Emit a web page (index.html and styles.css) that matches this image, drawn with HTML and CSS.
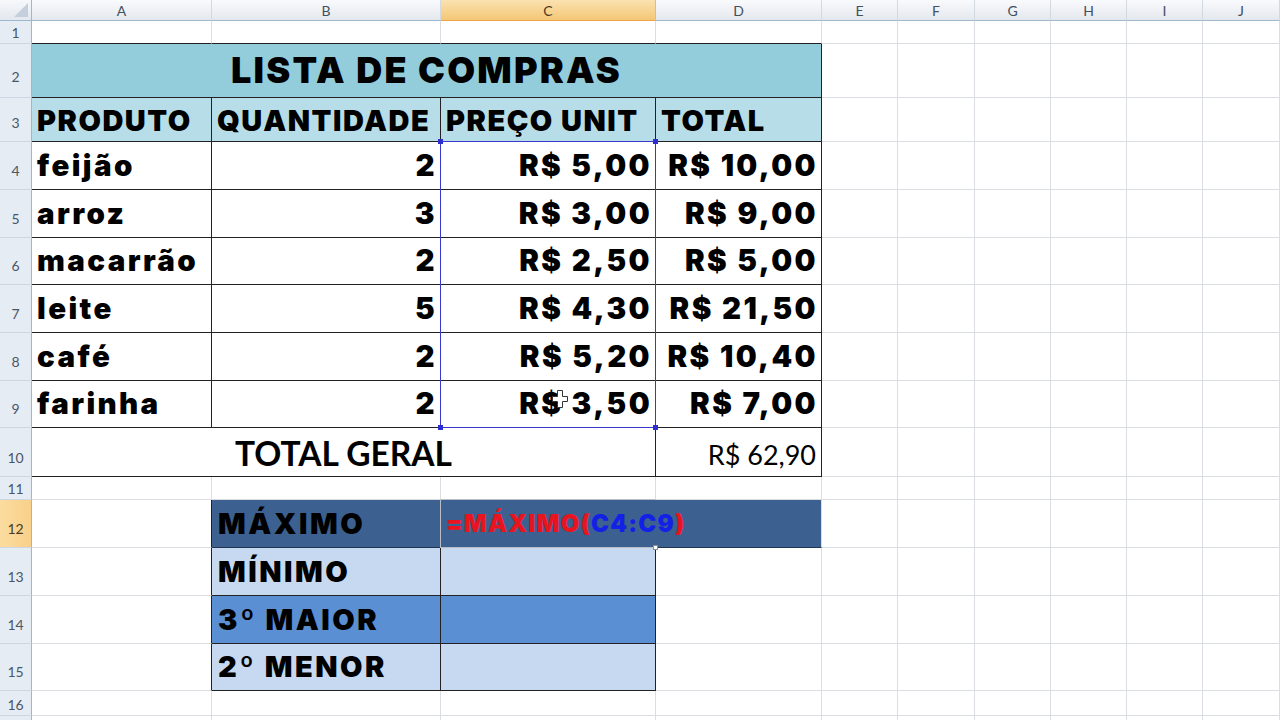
FILE: index.html
```html
<!DOCTYPE html>
<html lang="pt-BR">
<head>
<meta charset="utf-8">
<title>Lista de Compras</title>
<link rel="stylesheet" href="styles.css">
</head>
<body>
<div class="sheet">
  <!-- column headers -->
  <div class="corner"></div>
  <div class="ch">A</div><div class="ch">B</div><div class="ch sel">C</div><div class="ch">D</div>
  <div class="ch">E</div><div class="ch">F</div><div class="ch">G</div><div class="ch">H</div><div class="ch">I</div><div class="ch">J</div>

  <!-- row 1 -->
  <div class="rh">1</div>
  <div class="c bb"></div><div class="c bb"></div><div class="c bb"></div><div class="c bb"></div>
  <div class="c"></div><div class="c"></div><div class="c"></div><div class="c"></div><div class="c"></div><div class="c"></div>

  <!-- row 2 -->
  <div class="rh tall2">2</div>
  <div class="c title span4">LISTA DE COMPRAS</div>
  <div class="c"></div><div class="c"></div><div class="c"></div><div class="c"></div><div class="c"></div><div class="c"></div>

  <!-- row 3 -->
  <div class="rh tall">3</div>
  <div class="c th">PRODUTO</div><div class="c th">QUANTIDADE</div><div class="c th">PREÇO UNIT</div><div class="c th">TOTAL</div>
  <div class="c"></div><div class="c"></div><div class="c"></div><div class="c"></div><div class="c"></div><div class="c"></div>

  <!-- row 4 -->
  <div class="rh tall">4</div>
  <div class="c td">feijão</div><div class="c td num">2</div><div class="c td num">R$ 5,00</div><div class="c td num">R$ 10,00</div>
  <div class="c"></div><div class="c"></div><div class="c"></div><div class="c"></div><div class="c"></div><div class="c"></div>

  <!-- row 5 -->
  <div class="rh tall">5</div>
  <div class="c td">arroz</div><div class="c td num">3</div><div class="c td num">R$ 3,00</div><div class="c td num">R$ 9,00</div>
  <div class="c"></div><div class="c"></div><div class="c"></div><div class="c"></div><div class="c"></div><div class="c"></div>

  <!-- row 6 -->
  <div class="rh tall">6</div>
  <div class="c td">macarrão</div><div class="c td num">2</div><div class="c td num">R$ 2,50</div><div class="c td num">R$ 5,00</div>
  <div class="c"></div><div class="c"></div><div class="c"></div><div class="c"></div><div class="c"></div><div class="c"></div>

  <!-- row 7 -->
  <div class="rh tall">7</div>
  <div class="c td">leite</div><div class="c td num">5</div><div class="c td num">R$ 4,30</div><div class="c td num">R$ 21,50</div>
  <div class="c"></div><div class="c"></div><div class="c"></div><div class="c"></div><div class="c"></div><div class="c"></div>

  <!-- row 8 -->
  <div class="rh tall">8</div>
  <div class="c td">café</div><div class="c td num">2</div><div class="c td num">R$ 5,20</div><div class="c td num">R$ 10,40</div>
  <div class="c"></div><div class="c"></div><div class="c"></div><div class="c"></div><div class="c"></div><div class="c"></div>

  <!-- row 9 -->
  <div class="rh tall">9</div>
  <div class="c td">farinha</div><div class="c td num">2</div><div class="c td num">R$ 3,50</div><div class="c td num">R$ 7,00</div>
  <div class="c"></div><div class="c"></div><div class="c"></div><div class="c"></div><div class="c"></div><div class="c"></div>

  <!-- row 10 -->
  <div class="rh tall">10</div>
  <div class="c tot span3">TOTAL GERAL</div><div class="c totv">R$ 62,90</div>
  <div class="c"></div><div class="c"></div><div class="c"></div><div class="c"></div><div class="c"></div><div class="c"></div>

  <!-- row 11 -->
  <div class="rh">11</div>
  <div class="c"></div><div class="c"></div><div class="c"></div><div class="c"></div>
  <div class="c"></div><div class="c"></div><div class="c"></div><div class="c"></div><div class="c"></div><div class="c"></div>

  <!-- row 12 -->
  <div class="rh tall sel">12</div>
  <div class="c rb"></div>
  <div class="c lab dark">MÁXIMO</div>
  <div class="c fx span2"><span class="red">=MÁXIMO(</span><span class="blue">C4:C9</span><span class="red">)</span></div>
  <div class="c"></div><div class="c"></div><div class="c"></div><div class="c"></div><div class="c"></div><div class="c"></div>

  <!-- row 13 -->
  <div class="rh tall">13</div>
  <div class="c rb"></div>
  <div class="c lab light">MÍNIMO</div><div class="c val light"></div><div class="c"></div>
  <div class="c"></div><div class="c"></div><div class="c"></div><div class="c"></div><div class="c"></div><div class="c"></div>

  <!-- row 14 -->
  <div class="rh tall">14</div>
  <div class="c rb"></div>
  <div class="c lab mid">3º MAIOR</div><div class="c val mid"></div><div class="c"></div>
  <div class="c"></div><div class="c"></div><div class="c"></div><div class="c"></div><div class="c"></div><div class="c"></div>

  <!-- row 15 -->
  <div class="rh tall">15</div>
  <div class="c rb"></div>
  <div class="c lab light">2º MENOR</div><div class="c val light"></div><div class="c"></div>
  <div class="c"></div><div class="c"></div><div class="c"></div><div class="c"></div><div class="c"></div><div class="c"></div>

  <!-- row 16 -->
  <div class="rh">16</div>
  <div class="c"></div><div class="c"></div><div class="c"></div><div class="c"></div>
  <div class="c"></div><div class="c"></div><div class="c"></div><div class="c"></div><div class="c"></div><div class="c"></div>

  <!-- row 17 (only its top edge is visible) -->
  <div class="rh"></div>
  <div class="c"></div><div class="c"></div><div class="c"></div><div class="c"></div>
  <div class="c"></div><div class="c"></div><div class="c"></div><div class="c"></div><div class="c"></div><div class="c"></div>

  <!-- overlays -->
  <div class="range">
    <span class="hd tl"></span><span class="hd tr"></span><span class="hd bl"></span><span class="hd br"></span>
  </div>
  <div class="editbox"><span class="fill"></span></div>
  <svg class="cursor" width="16" height="18" viewBox="0 0 16 18">
    <path d="M5.5 0.5 H10.5 V6.5 H15.5 V11.5 H10.5 V17.5 H5.5 V11.5 H0.5 V6.5 H5.5 Z" fill="#ffffff" stroke="#333333" stroke-width="1"/>
  </svg>
</div>
</body>
</html>
```

FILE: styles.css
```css
* { box-sizing: border-box; }
html, body {
  margin: 0;
  height: 100%;
  overflow: hidden;
  background: #ffffff;
}
.sheet {
  position: relative;
  display: grid;
  grid-template-columns: 32px 180px 229px 215px 166px 76px 77px 76px 76px 76px 77px;
  grid-template-rows: 21px 23px 54px 44px 48px 48px 47px 48px 48px 47px 49px 23px 48px 48px 48px 47px 25px 23px;
  font-family: "Inter", "Liberation Sans", sans-serif;
  color: #000;
}

/* headers */
.corner {
  position: relative;
  background: linear-gradient(#f6f8fb, #e3e8ee);
  border-right: 1px solid #9eb6ce;
  border-bottom: 1px solid #9eb6ce;
}
.corner::after {
  content: "";
  position: absolute;
  right: 3px;
  bottom: 3px;
  width: 14px;
  height: 14px;
  background: #c5cfdb;
  clip-path: polygon(100% 0, 100% 100%, 0 100%);
}
.ch {
  display: flex;
  align-items: center;
  justify-content: center;
  background: linear-gradient(#f9fafc, #e4e8ee);
  border-right: 1px solid #d3d9e1;
  border-bottom: 1px solid #9eb6ce;
  font: 14px "Lato", "Open Sans", sans-serif;
  color: #44505e;
}
.ch.sel {
  background: linear-gradient(#fbe2b0, #f4c777);
  border-bottom: 1px solid #eea345;
  border-right: 1px solid #e6bb74;
  color: #4a3b20;
}
.rh {
  display: flex;
  align-items: flex-end;
  justify-content: center;
  padding-bottom: 3px;
  background: #e6ecf4;
  border-right: 1px solid #9eb6ce;
  border-bottom: 1px solid #cdd6e2;
  font: 14px "Lato", "Open Sans", sans-serif;
  line-height: 1;
  color: #4b5665;
}
.rh.tall { padding-bottom: 11px; }
.rh.tall2 { padding-bottom: 13px; }
.rh.sel {
  background: linear-gradient(90deg, #fbdc9f, #f8d089);
  color: #4a3b20;
}

/* cells */
.c {
  display: flex;
  align-items: flex-end;
  white-space: nowrap;
  border-right: 1px solid #dadde2;
  border-bottom: 1px solid #dadde2;
  line-height: 1;
  font-weight: 900;
  min-width: 0;
}
.bb { border-bottom-color: #222; }
.rb { border-right-color: #222; }
.span4 { grid-column: span 4; }
.span3 { grid-column: span 3; }
.span2 { grid-column: span 2; }

.title {
  justify-content: center;
  background: #93cddc;
  border-right-color: #222;
  border-bottom-color: #222;
  font-size: 36px;
  letter-spacing: 2.2px;
  padding-bottom: 9px;
}
.th {
  background: #b7dee8;
  border-right-color: #222;
  border-bottom-color: #222;
  font-size: 29px;
  letter-spacing: 1.5px;
  padding: 0 2px 6px 5px;
}
.td {
  border-right-color: #222;
  border-bottom-color: #222;
  font-size: 29.5px;
  letter-spacing: 2.4px;
  padding: 0 3px 9px 5px;
}
.num { justify-content: flex-end; }

.tot {
  justify-content: center;
  border-right-color: #222;
  border-bottom-color: #222;
  font-family: "Lato", "Open Sans", sans-serif;
  font-weight: 700;
  font-size: 33.5px;
  padding-bottom: 6px;
}
.totv {
  justify-content: flex-end;
  border-right-color: #222;
  border-bottom-color: #222;
  font-family: "Lato", "Open Sans", sans-serif;
  font-weight: 400;
  font-size: 27px;
  padding: 0 5px 8px 0;
}

.lab {
  border-right-color: #222;
  border-bottom-color: #222;
  font-size: 29px;
  letter-spacing: 2.5px;
  padding: 0 2px 9px 6px;
}
.val {
  border-right-color: #222;
  border-bottom-color: #222;
}
.dark { background: #3c6190; border-bottom-color: #1f3550; }
.light { background: #c6d9f0; }
.mid { background: #5b8fd3; }

.fx {
  background: #3c6190;
  border-right-color: #dadde2;
  border-bottom-color: #1f3550;
  font-size: 24px;
  letter-spacing: 1.2px;
  padding: 0 4px 11px 5px;
}
.red { color: #e8141e; }
.blue { color: #1320e6; }

/* overlays */
.range {
  position: absolute;
  grid-column: 4 / 5;
  grid-row: 5 / 11;
  inset: -1px 0 0 -1px;
  border: 1px solid #3838cc;
  pointer-events: none;
}
.hd {
  position: absolute;
  width: 5px;
  height: 5px;
  background: #2d2dd0;
}
.hd.tl { left: -3px; top: -3px; }
.hd.tr { right: -3px; top: -3px; }
.hd.bl { left: -3px; bottom: -3px; }
.hd.br { right: -3px; bottom: -3px; }

.editbox {
  position: absolute;
  grid-column: 4 / 5;
  grid-row: 13 / 14;
  inset: -1px 0 0 -1px;
  border: 1px solid #b9bec6;
  border-right-color: transparent;
  pointer-events: none;
}
.fill {
  position: absolute;
  right: -3px;
  bottom: -3px;
  width: 5px;
  height: 5px;
  background: #ffffff;
  border: 1px solid #8a9099;
}
.cursor {
  position: absolute;
  left: 552px;
  top: 390px;
}
```
